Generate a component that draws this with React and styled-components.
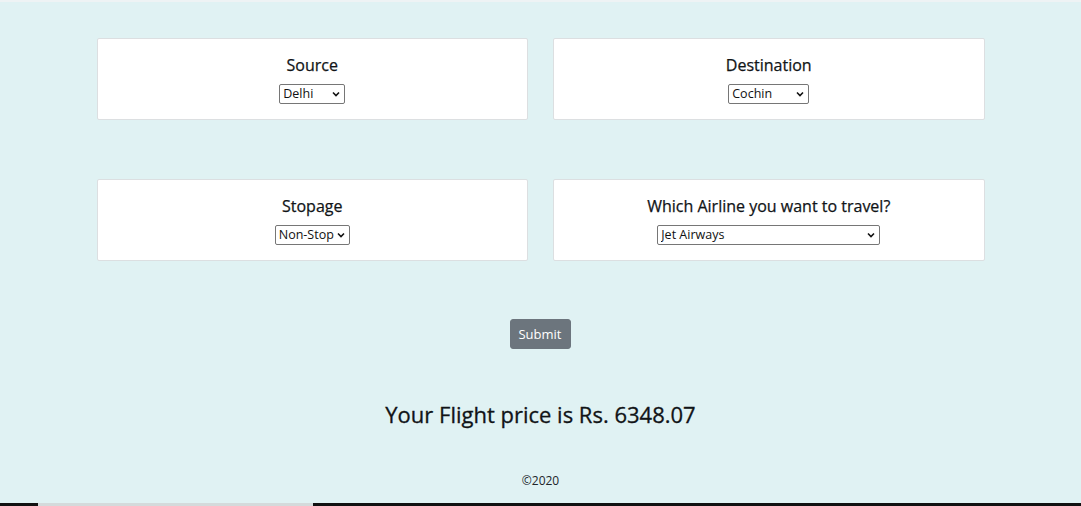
import React from "react";
import styled, { createGlobalStyle } from "styled-components";

const Global = createGlobalStyle`
  html, body { margin: 0; padding: 0; }
  body {
    background: #e0f2f3;
    font-family: "Open Sans", "Noto Sans", sans-serif;
    color: #212529;
  }
`;

const Page = styled.div`
  min-height: 506px;
  display: flex;
  flex-direction: column;
  border-top: 2px solid #eef3f4;
  box-sizing: border-box;
`;

const Container = styled.main`
  width: 888px;
  margin: 0 auto;
  padding-top: 36px;
  display: flex;
  flex-direction: column;
  gap: 59px;
`;

const Row = styled.div`
  display: grid;
  grid-template-columns: 1fr 1fr;
  gap: 25px;
`;

const Card = styled.div`
  background: #fff;
  border: 1px solid #dcdfe1;
  border-radius: 2px;
  height: 82px;
  box-sizing: border-box;
  padding-top: 15px;
  display: flex;
  flex-direction: column;
  align-items: center;
`;

const Label = styled.label`
  font-size: 16px;
  line-height: 22px;
  font-weight: 400;
  color: #111417;
  -webkit-text-stroke: 0.25px #111417;
  margin-bottom: 8px;
`;

const SelectWrap = styled.div`
  position: relative;
  width: ${(p) => p.$w}px;
  height: 20px;
`;

const Select = styled.select`
  display: block;
  appearance: none;
  -webkit-appearance: none;
  width: 100%;
  height: 20px;
  margin: 0;
  font-family: inherit;
  font-size: 12.5px;
  line-height: 18px;
  color: #111;
  border: 1px solid #767676;
  border-radius: 2px;
  background: #fff;
  padding: 0 11px 0 3px;
  box-sizing: border-box;
  outline: none;
`;

const Chevron = styled.svg`
  position: absolute;
  right: 5px;
  top: 7px;
  width: 8px;
  height: 6px;
  pointer-events: none;
`;

const Actions = styled.div`
  display: flex;
  justify-content: center;
`;

const Button = styled.button`
  width: 61px;
  height: 30px;
  margin-left: -1px;
  margin-top: -1px;
  background: #6c757d;
  border: 1px solid #6c757d;
  border-radius: 3px;
  color: #fff;
  font-family: inherit;
  font-size: 13px;
  padding: 0;
  cursor: pointer;
`;

const Price = styled.h2`
  margin: -9px 0 0;
  text-align: center;
  font-size: 22px;
  line-height: 30px;
  font-weight: 400;
  color: #111417;
  -webkit-text-stroke: 0.3px #111417;
`;

const Footer = styled.footer`
  text-align: center;
  font-size: 12px;
  line-height: 16px;
  color: #212529;
  margin-top: 44px;
`;

const Spacer = styled.div`
  flex: 1;
`;

const BottomBar = styled.div`
  height: 3px;
  display: flex;
  background: #111;
`;

const BarSeg = styled.div`
  width: ${(p) => p.$w}px;
  background: ${(p) => p.$c};
`;

function Dropdown({ w, value, options }) {
  return (
    <SelectWrap $w={w}>
      <Select defaultValue={value}>
        {options.map((o) => (
          <option key={o}>{o}</option>
        ))}
      </Select>
      <Chevron viewBox="0 0 8 6">
        <path d="M1 1.5 L4 4.5 L7 1.5" fill="none" stroke="#111" strokeWidth="1.6" />
      </Chevron>
    </SelectWrap>
  );
}

export default function App() {
  return (
    <>
      <Global />
      <Page>
        <Container>
          <Row>
            <Card>
              <Label>Source</Label>
              <Dropdown w={66} value="Delhi" options={["Delhi", "Kolkata", "Mumbai", "Chennai", "Banglore"]} />
            </Card>
            <Card>
              <Label>Destination</Label>
              <Dropdown w={81} value="Cochin" options={["Cochin", "Delhi", "New Delhi", "Hyderabad", "Kolkata", "Banglore"]} />
            </Card>
          </Row>
          <Row>
            <Card>
              <Label>Stopage</Label>
              <Dropdown w={75} value="Non-Stop" options={["Non-Stop", "1", "2", "3", "4"]} />
            </Card>
            <Card>
              <Label>Which Airline you want to travel?</Label>
              <Dropdown
                w={223}
                value="Jet Airways"
                options={[
                  "Jet Airways",
                  "IndiGo",
                  "Air India",
                  "Multiple carriers",
                  "SpiceJet",
                  "Vistara",
                  "Air Asia",
                  "GoAir",
                  "Multiple carriers Premium economy",
                ]}
              />
            </Card>
          </Row>
          <Actions>
            <Button type="button">Submit</Button>
          </Actions>
          <Price>Your Flight price is Rs. 6348.07</Price>
        </Container>
        <Footer>©2020</Footer>
        <Spacer />
        <BottomBar>
          <BarSeg $w={38} $c="#111" />
          <BarSeg $w={275} $c="#d4dadb" />
        </BottomBar>
      </Page>
    </>
  );
}
